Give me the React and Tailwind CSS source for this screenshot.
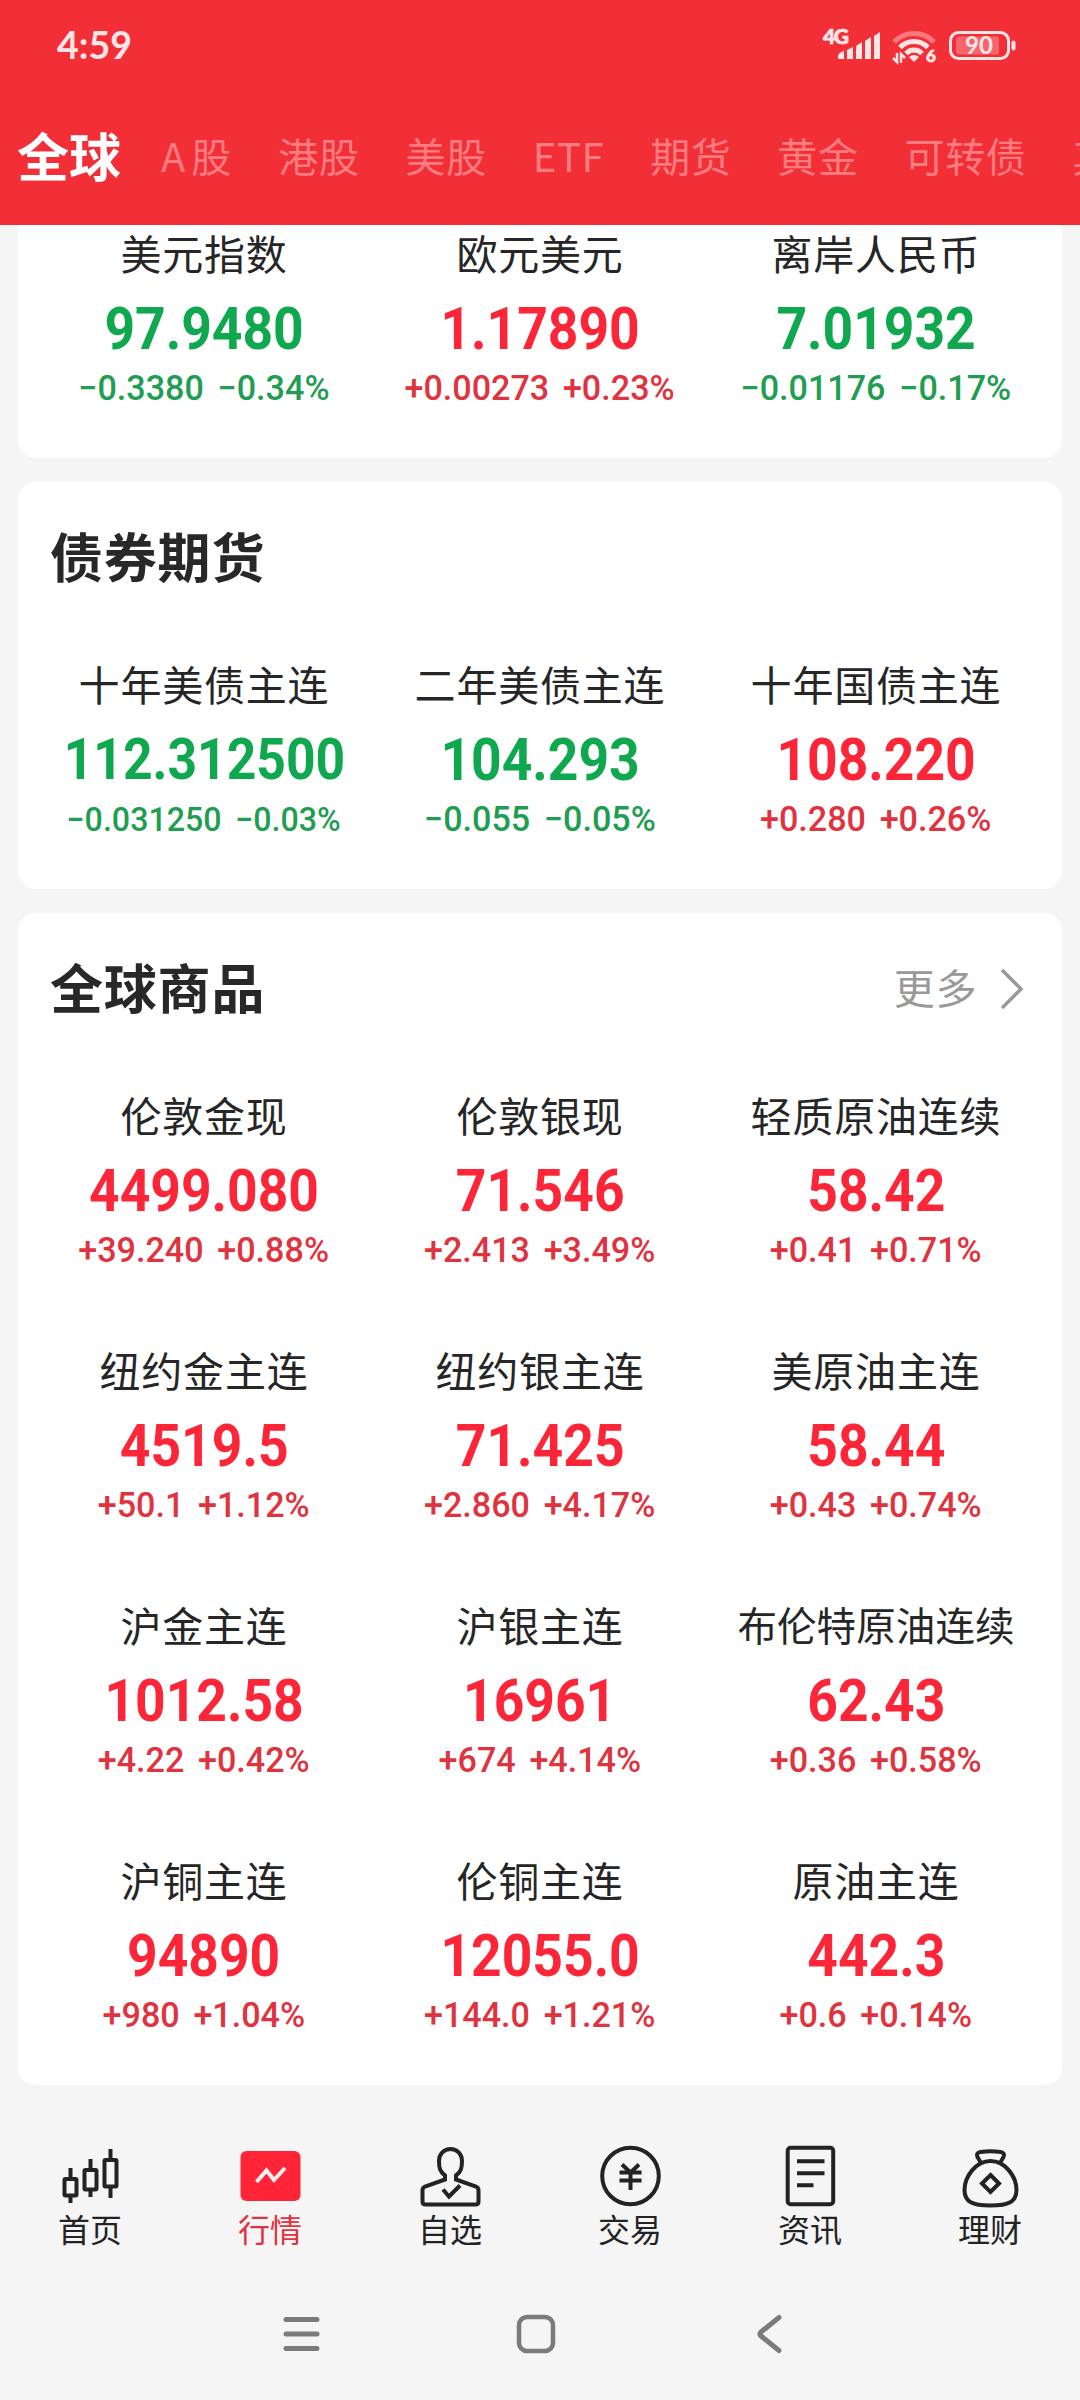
import { Fragment } from 'react'

const tabs = ['A股', '港股', '美股', 'ETF', '期货', '黄金', '可转债', '其他']

const forex = [
  { name: '美元指数', price: '97.9480', change: '−0.3380', percent: '−0.34%' },
  { name: '欧元美元', price: '1.17890', change: '+0.00273', percent: '+0.23%' },
  { name: '离岸人民币', price: '7.01932', change: '−0.01176', percent: '−0.17%' },
]

const bonds = [
  { name: '十年美债主连', price: '112.312500', change: '−0.031250', percent: '−0.03%' },
  { name: '二年美债主连', price: '104.293', change: '−0.055', percent: '−0.05%' },
  { name: '十年国债主连', price: '108.220', change: '+0.280', percent: '+0.26%' },
]

const commodities = [
  { name: '伦敦金现', price: '4499.080', change: '+39.240', percent: '+0.88%' },
  { name: '伦敦银现', price: '71.546', change: '+2.413', percent: '+3.49%' },
  { name: '轻质原油连续', price: '58.42', change: '+0.41', percent: '+0.71%' },
  { name: '纽约金主连', price: '4519.5', change: '+50.1', percent: '+1.12%' },
  { name: '纽约银主连', price: '71.425', change: '+2.860', percent: '+4.17%' },
  { name: '美原油主连', price: '58.44', change: '+0.43', percent: '+0.74%' },
  { name: '沪金主连', price: '1012.58', change: '+4.22', percent: '+0.42%' },
  { name: '沪银主连', price: '16961', change: '+674', percent: '+4.14%' },
  { name: '布伦特原油连续', price: '62.43', change: '+0.36', percent: '+0.58%' },
  { name: '沪铜主连', price: '94890', change: '+980', percent: '+1.04%' },
  { name: '伦铜主连', price: '12055.0', change: '+144.0', percent: '+1.21%' },
  { name: '原油主连', price: '442.3', change: '+0.6', percent: '+0.14%' },
]

function StatusBar() {
  return (
    <div className="flex h-[92px] items-center justify-between pl-[57px] pr-[64px] font-['Lato','Noto_Sans_CJK_SC',sans-serif] text-[#ffe5e6]">
      <span className="pb-[2px] text-[37.5px] font-bold leading-none">4:59</span>
      <svg className="overflow-visible" width="194" height="44" viewBox="0 0 194 44" fill="none">
        <text x="1" y="20" fontSize="21" fontWeight="900" fill="currentColor" stroke="currentColor" strokeWidth="0.7" textLength="26">4G</text>
        <g fill="currentColor">
          <path d="M16 35v-3q1-4 6-5v8z" />
          <path d="M25 35v-9l6-3v12z" />
          <path d="M34 35V22l6-4v17z" />
          <path d="M43 35V17l6-4v22z" />
          <path d="M52 35V12l6-4v27z" />
        </g>
        <g stroke="currentColor" strokeWidth="5">
          <path d="M72 18a28 28 0 0 1 40 0" opacity=".4" />
          <path d="M78 23.500a19.500 19.500 0 0 1 28 0" />
          <path d="M84 29.500a11 11 0 0 1 16 0" />
        </g>
        <path d="M87 33q5-4 10 0l-5 5z" fill="currentColor" />
        <path d="M75 29v9l-4-4M79 39v-9l4 4" stroke="currentColor" strokeWidth="2.500" />
        <text x="104" y="38" fontSize="17" fontWeight="900" fill="currentColor" stroke="currentColor" strokeWidth="0.7">6</text>
        <rect x="128.500" y="8.500" width="58" height="26" rx="8" stroke="currentColor" strokeWidth="3" />
        <rect x="134" y="12.500" width="43" height="18" rx="3" fill="currentColor" opacity=".3" />
        <rect x="189.500" y="16.500" width="4" height="10" rx="2" fill="currentColor" />
        <text x="157" y="30" fontSize="24" fontWeight="700" fill="currentColor" textAnchor="middle">90</text>
      </svg>
    </div>
  )
}

function Header() {
  return (
    <header className="h-[225px] overflow-hidden bg-[#f22f37]">
      <StatusBar />
      <nav className="flex h-[126px] items-center gap-[46px] whitespace-nowrap pl-[17px] text-[40px] tracking-[0.6px] text-[#ff7c80]">
        <span className="-mr-[6px] text-[52px] font-bold tracking-normal text-white">全球</span>
        {tabs.map((tab) => (
          <span key={tab} className={tab === 'A股' ? '-mr-[5px] tracking-[6px]' : ''}>{tab}</span>
        ))}
      </nav>
    </header>
  )
}

function Quote({ name, price, change, percent }) {
  const down = change.startsWith('−')
  const small = price.length > 9

  return (
    <div className="flex h-[255px] flex-col items-center whitespace-nowrap pt-[21px]">
      <div
        className={`h-[56px] leading-[56px] text-[#262626] ${name.length > 6 ? 'text-[39.5px] tracking-[0.1px]' : 'text-[41px] tracking-[0.8px]'}`}
      >
        {name}
      </div>
      <div
        className={`mt-[19px] h-[60px] scale-x-[0.905] font-['Roboto',sans-serif] font-bold leading-[60px] ${small ? 'text-[57px]' : 'text-[59px]'} ${down ? 'text-[#0fa84e]' : 'text-[#fc2638]'}`}
      >
        {price}
      </div>
      <div
        className={`mt-[8px] flex h-[44px] scale-x-[0.975] gap-[14px] font-['Roboto',sans-serif] font-medium leading-[44px] ${small ? 'text-[33px]' : 'text-[35px]'} ${down ? 'text-[#1f9d52]' : 'text-[#df3340]'}`}
      >
        <span>{change}</span>
        <span>{percent}</span>
      </div>
    </div>
  )
}

function Card({ title, more, items }) {
  return (
    <section className="rounded-[18px] bg-white">
      <div className="flex h-[152px] items-center justify-between pb-[5px] pl-[32px] pr-[38px]">
        <h2 className="text-[53px] font-bold tracking-[0.8px] text-[#282828]">{title}</h2>
        {more && (
          <div className="flex items-center gap-[23px] text-[41px] tracking-[0.6px] text-[#999]">
            <span>更多</span>
            <svg className="mt-[4px]" width="24" height="42" viewBox="0 0 24 42" fill="none" stroke="currentColor" strokeWidth="3.500">
              <path d="M2 2l19 19L2 40" />
            </svg>
          </div>
        )}
      </div>
      <div className="grid grid-cols-3 px-[18px]">
        {items.map((item) => (
          <Quote key={item.name} {...item} />
        ))}
      </div>
    </section>
  )
}

const navItems = [
  {
    label: '首页',
    icon: (
      <Fragment>
        <rect x="4.500" y="36" width="12" height="16.500" rx="1" />
        <path d="M10.500 25v10M10.500 53v7" />
        <rect x="24.500" y="27" width="12" height="19.500" rx="1" />
        <path d="M30.500 16v10M30.500 47v7" />
        <rect x="44.500" y="17" width="12" height="26.500" rx="1" />
        <path d="M50.500 6v10M50.500 44v11" />
      </Fragment>
    ),
  },
  {
    label: '行情',
    active: true,
    icon: (
      <Fragment>
        <rect x="0.500" y="8" width="60" height="50" rx="6" fill="#ff2537" stroke="none" />
        <path d="M16.500 39l10-11.500 7.500 9.500 11-12" stroke="#ffeef0" />
      </Fragment>
    ),
  },
  {
    label: '自选',
    icon: (
      <Fragment>
        <path d="M25 36.500v-4C20 29 19 25 19 18c0-7 5-12 11.500-12S42 11 42 18c0 7-1 11-6 14.500v4l20 7q2.500 1 2.500 4v11q0 3-3 3h-50q-3 0-3-3v-11q0-3 2.500-4z" />
        <path d="M23 46.500l6 7 11-11" />
      </Fragment>
    ),
  },
  {
    label: '交易',
    icon: (
      <Fragment>
        <circle cx="30.500" cy="33" r="28.300" />
        <path d="M22 21.500l8.500 8 8.500-8M19.500 29.500h22M19.500 37.500h22M30.500 29v18" />
      </Fragment>
    ),
  },
  {
    label: '资讯',
    icon: (
      <Fragment>
        <rect x="7.700" y="4.700" width="45.500" height="56.500" rx="3" />
        <path d="M17 18.300h27.500M17 30.300h27.500M17 42.200h16.500" />
      </Fragment>
    ),
  },
  {
    label: '理财',
    icon: (
      <Fragment>
        <path d="M21 20l-3.500-6q-2-4 3-5 10-1.500 20 0 5 1 3 5L40 20" />
        <path d="M30.500 18C15.500 18 4.500 34 4.500 47c0 12 8 15.500 26 15.500s26-3.500 26-15.500c0-13-11-29-26-29z" />
        <path d="M30.500 32l8.500 8.500-8.500 8.500-8.500-8.500z" />
      </Fragment>
    ),
  },
]

function BottomNav() {
  return (
    <nav className="grid h-[144px] grid-cols-6 text-[32px] text-[#232323]">
      {navItems.map(({ label, icon, active }) => (
        <div key={label} className="flex flex-col items-center pt-[22px]">
          <svg width="61" height="66" viewBox="0 0 61 66" fill="none" stroke="currentColor" strokeWidth="4">
            {icon}
          </svg>
          <span className={`mt-[-3px] leading-[44px] ${active ? 'text-[#e2323f]' : ''}`}>{label}</span>
        </div>
      ))}
    </nav>
  )
}

function SystemBar() {
  return (
    <div className="flex h-[135px] items-center justify-center gap-[194px] pr-[8px] pt-[2px] text-[#7b7b7b]">
      <svg width="40" height="40" viewBox="0 0 40 40" fill="none" stroke="currentColor" strokeWidth="5" strokeLinecap="round">
        <path d="M4 5.500h31M4 20h31M4 34.500h31" />
      </svg>
      <svg width="40" height="40" viewBox="0 0 40 40" fill="none" stroke="currentColor" strokeWidth="4.500">
        <rect x="3" y="3" width="34" height="34" rx="8" />
      </svg>
      <svg width="40" height="40" viewBox="0 0 40 40" fill="none" stroke="currentColor" strokeWidth="5" strokeLinecap="round" strokeLinejoin="round">
        <path d="M29 3.500L11 18q-2 2 0 4l18 14.500" />
      </svg>
    </div>
  )
}

export default function App() {
  return (
    <div className="h-[2400px] w-[1080px] overflow-hidden bg-[#f5f5f5] font-['Noto_Sans_CJK_SC',sans-serif]">
      <Header />
      <main className="flex h-[1896px] flex-col gap-[24px] px-[18px]">
        {/* first card is scrolled partly under the header */}
        <section className="h-[233px] shrink-0 overflow-hidden rounded-b-[18px] bg-white px-[18px]">
          <div className="-mt-[22px] grid grid-cols-3">
            {forex.map((item) => (
              <Quote key={item.name} {...item} />
            ))}
          </div>
        </section>
        <Card title="债券期货" items={bonds} />
        <Card title="全球商品" more items={commodities} />
      </main>
      <BottomNav />
      <SystemBar />
    </div>
  )
}
